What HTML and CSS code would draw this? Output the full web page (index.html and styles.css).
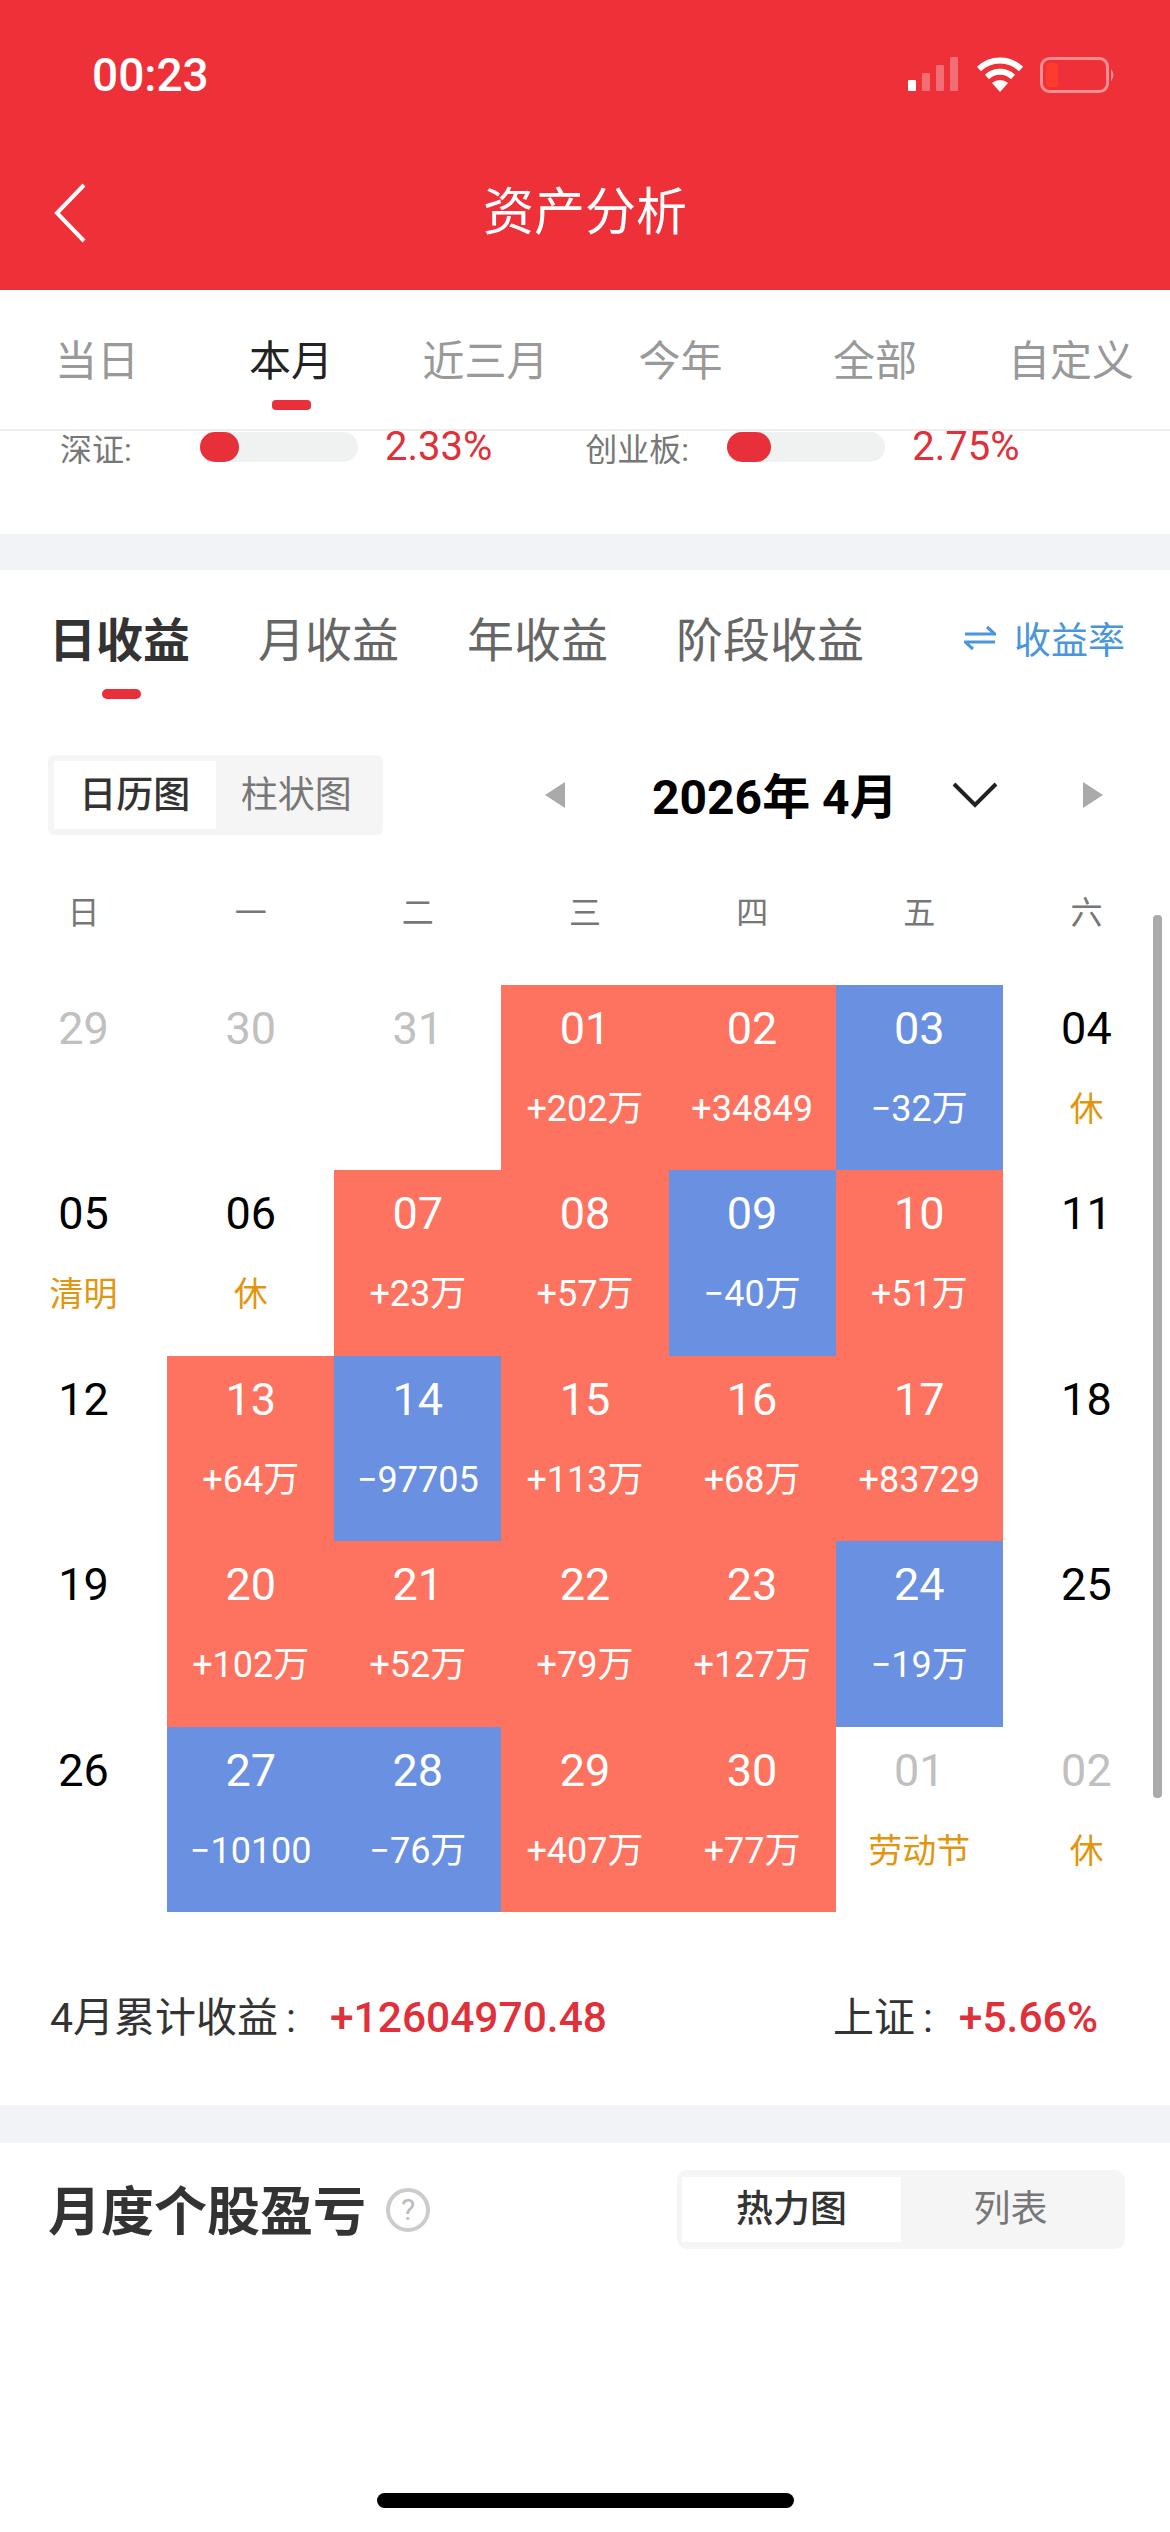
FILE: index.html
```html
<!DOCTYPE html>
<html lang="zh-CN">
<head>
    <meta charset="utf-8">
    <title>资产分析</title>
    <link rel="stylesheet" href="styles.css">
</head>
<body>
    <header class="top">
        <div class="status">
            <span class="time">00:23</span>
            <div class="status-icons">
                <svg width="52" height="36" viewBox="0 0 52 36">
                    <rect x="0" y="23" width="8" height="11" rx="1" fill="#fff"/>
                    <rect x="14" y="16" width="8" height="18" rx="1" fill="#fff" opacity=".3"/>
                    <rect x="28" y="8" width="8" height="26" rx="1" fill="#fff" opacity=".3"/>
                    <rect x="42" y="0" width="8" height="34" rx="1" fill="#fff" opacity=".3"/>
                </svg>
                <svg width="48" height="36" viewBox="0 0 48 36">
                    <path d="M3 12 A30 30 0 0 1 45 12" fill="none" stroke="#fff" stroke-width="6"/>
                    <path d="M11 20 A19 19 0 0 1 37 20" fill="none" stroke="#fff" stroke-width="6"/>
                    <path d="M16 26 A12 12 0 0 1 32 26 L24 35 Z" fill="#fff"/>
                </svg>
                <svg width="78" height="36" viewBox="0 0 78 36">
                    <rect x="1.5" y="1.5" width="66" height="33" rx="8" fill="none" stroke="#fff" stroke-opacity=".45" stroke-width="3"/>
                    <rect x="6" y="6" width="12" height="24" rx="3" fill="#ff3b30"/>
                    <path d="M71 12 Q76 18 71 24 Z" fill="#fff" opacity=".45"/>
                </svg>
            </div>
        </div>
        <div class="nav">
            <svg class="back" width="36" height="62" viewBox="0 0 36 62">
                <path d="M32 3 L5 31 L32 59" fill="none" stroke="#fff" stroke-width="4"/>
            </svg>
            <h1>资产分析</h1>
        </div>
    </header>

    <div class="ranges">
        <div class="range">当日</div>
        <div class="range on">本月</div>
        <div class="range">近三月</div>
        <div class="range">今年</div>
        <div class="range">全部</div>
        <div class="range">自定义</div>
    </div>

    <div class="index-row">
        <span class="index-name">深证:</span>
        <div class="bar"><div class="bar-fill" style="width: 39px"></div></div>
        <span class="index-pct">2.33%</span>
        <span class="index-name second">创业板:</span>
        <div class="bar"><div class="bar-fill" style="width: 44px"></div></div>
        <span class="index-pct">2.75%</span>
    </div>

    <div class="band"></div>

    <section class="income">
        <div class="income-tabs">
            <div class="income-tab on">日收益</div>
            <div class="income-tab">月收益</div>
            <div class="income-tab">年收益</div>
            <div class="income-tab">阶段收益</div>
            <div class="rate">
                <svg width="32" height="28" viewBox="0 0 32 28">
                    <path d="M1 10 H31 L23 3" fill="none" stroke="#4a96dc" stroke-width="3"/>
                    <path d="M31 18 H1 L9 25" fill="none" stroke="#4a96dc" stroke-width="3"/>
                </svg>
                <span>收益率</span>
            </div>
        </div>

        <div class="cal-head">
            <div class="seg">
                <div class="seg-item on">日历图</div>
                <div class="seg-item">柱状图</div>
            </div>
            <div class="month">
                <span class="tri left"></span>
                <span class="month-text">2026年 4月</span>
                <svg class="month-down" width="46" height="26" viewBox="0 0 46 26">
                    <path d="M2 2 L23 23 L44 2" fill="none" stroke="#222" stroke-width="4"/>
                </svg>
                <span class="tri right"></span>
            </div>
        </div>

        <div class="week">
            <span>日</span><span>一</span><span>二</span><span>三</span><span>四</span><span>五</span><span>六</span>
        </div>

        <div class="cal">
            <div class="day old"><b>29</b></div>
            <div class="day old"><b>30</b></div>
            <div class="day old"><b>31</b></div>
            <div class="day up"><b>01</b><i>+202万</i></div>
            <div class="day up"><b>02</b><i>+34849</i></div>
            <div class="day down"><b>03</b><i>−32万</i></div>
            <div class="day"><b>04</b><i class="off">休</i></div>

            <div class="day"><b>05</b><i class="off">清明</i></div>
            <div class="day"><b>06</b><i class="off">休</i></div>
            <div class="day up"><b>07</b><i>+23万</i></div>
            <div class="day up"><b>08</b><i>+57万</i></div>
            <div class="day down"><b>09</b><i>−40万</i></div>
            <div class="day up"><b>10</b><i>+51万</i></div>
            <div class="day"><b>11</b></div>

            <div class="day"><b>12</b></div>
            <div class="day up"><b>13</b><i>+64万</i></div>
            <div class="day down"><b>14</b><i>−97705</i></div>
            <div class="day up"><b>15</b><i>+113万</i></div>
            <div class="day up"><b>16</b><i>+68万</i></div>
            <div class="day up"><b>17</b><i>+83729</i></div>
            <div class="day"><b>18</b></div>

            <div class="day"><b>19</b></div>
            <div class="day up"><b>20</b><i>+102万</i></div>
            <div class="day up"><b>21</b><i>+52万</i></div>
            <div class="day up"><b>22</b><i>+79万</i></div>
            <div class="day up"><b>23</b><i>+127万</i></div>
            <div class="day down"><b>24</b><i>−19万</i></div>
            <div class="day"><b>25</b></div>

            <div class="day"><b>26</b></div>
            <div class="day down"><b>27</b><i>−10100</i></div>
            <div class="day down"><b>28</b><i>−76万</i></div>
            <div class="day up"><b>29</b><i>+407万</i></div>
            <div class="day up"><b>30</b><i>+77万</i></div>
            <div class="day old"><b>01</b><i class="off">劳动节</i></div>
            <div class="day old"><b>02</b><i class="off">休</i></div>
        </div>

        <div class="sum">
            <div>4月累计收益<span class="colon">:</span><span class="red sum-val wide">+12604970.48</span></div>
            <div>上证<span class="colon">:</span><span class="red sum-val">+5.66%</span></div>
        </div>
    </section>

    <div class="band last"></div>

    <section class="stocks">
        <h2>月度个股盈亏</h2>
        <span class="help">?</span>
        <div class="seg big">
            <div class="seg-item on">热力图</div>
            <div class="seg-item">列表</div>
        </div>
    </section>

    <div class="scrollbar"></div>
    <div class="home"></div>
</body>
</html>
```

FILE: styles.css
```css
body {
    position: relative;
    width: 1170px;
    height: 2532px;
    margin: 0;
    overflow: hidden;
    background: #fff;
    font-family: Roboto, "Noto Sans CJK SC", sans-serif;
    color: #333;
}

.top {
    height: 290px;
    background: #ee3038;
    color: #fff;
}

.status {
    display: flex;
    justify-content: space-between;
    align-items: center;
    height: 150px;
    padding: 0 52px 0 92px;
}

.time {
    font-size: 46px;
    font-weight: 500;
}

.status-icons {
    display: flex;
    align-items: center;
    gap: 16px;
}

.nav {
    position: relative;
    display: flex;
    justify-content: center;
    height: 124px;
}

.back {
    position: absolute;
    left: 52px;
    top: 32px;
}

.nav h1 {
    margin: 0;
    font-size: 51px;
    font-weight: 400;
    line-height: 126px;
}

.ranges {
    position: relative;
    z-index: 1;
    display: grid;
    grid-template-columns: 194px 194px 195px 195px 194px 198px;
    box-sizing: border-box;
    height: 141px;
    background: #fff;
    border-bottom: 2px solid #eee;
}

.range {
    position: relative;
    padding-top: 44px;
    text-align: center;
    font-size: 42px;
    line-height: 56px;
    color: #999;
}

.range.on {
    color: #222;
}

.range.on::after {
    content: "";
    position: absolute;
    left: 78px;
    top: 110px;
    width: 39px;
    height: 10px;
    border-radius: 4px;
    background: #e8303a;
}

.index-row {
    display: flex;
    align-items: center;
    box-sizing: border-box;
    height: 103px;
    padding: 0 0 72px 60px;
}

.index-name {
    width: 140px;
    font-size: 32px;
    color: #777;
}

.index-name.second {
    width: 142px;
    margin-left: 93px;
}

.bar {
    width: 158px;
    height: 30px;
    border-radius: 15px;
    background: #f0f1f1;
}

.bar-fill {
    height: 30px;
    border-radius: 15px;
    background: #e8303a;
}

.index-pct {
    margin-left: 27px;
    font-size: 40px;
    color: #e0303a;
}

.band {
    height: 36px;
    background: #f2f3f7;
}

.income-tabs {
    display: flex;
    align-items: center;
    height: 132px;
    padding-left: 49px;
}

.income-tab {
    position: relative;
    margin-right: 68px;
    font-size: 47px;
    color: #666;
}

.income-tab.on {
    font-weight: 700;
    color: #333;
}

.income-tab.on::after {
    content: "";
    position: absolute;
    left: 53px;
    bottom: -28px;
    width: 39px;
    height: 10px;
    border-radius: 5px;
    background: #e8303a;
}

.rate {
    display: flex;
    align-items: center;
    gap: 18px;
    margin-top: 4px;
    margin-left: 32px;
    font-size: 37px;
    color: #4a96dc;
}

.cal-head {
    display: flex;
    align-items: center;
    height: 80px;
    margin-top: 53px;
    padding-left: 48px;
}

.seg {
    display: flex;
    box-sizing: border-box;
    width: 335px;
    height: 80px;
    padding: 6px;
    border-radius: 6px;
    background: #f5f5f6;
}

.seg-item {
    width: 162px;
    text-align: center;
    font-size: 37px;
    line-height: 70px;
    color: #777;
    height: 68px;
}

.seg-item.on {
    background: #fff;
    font-weight: 500;
    color: #333;
}

.month {
    display: flex;
    align-items: center;
    margin-left: 162px;
}

.tri {
    width: 0;
    height: 0;
    border-top: 13px solid transparent;
    border-bottom: 13px solid transparent;
}

.tri.left {
    border-right: 20px solid #aaa;
}

.tri.right {
    margin-left: 85px;
    border-left: 20px solid #aaa;
}

.month-text {
    margin-top: -4px;
    margin-left: 87px;
    font-size: 48px;
    font-weight: 700;
    color: #000;
}

.month-down {
    margin-left: 54px;
}

.week {
    display: grid;
    grid-template-columns: repeat(7, 1fr);
    margin-top: 55px;
    text-align: center;
    font-size: 32px;
    line-height: 46px;
    color: #777;
}

.cal {
    display: grid;
    grid-template-columns: repeat(7, 1fr);
    grid-auto-rows: 185.4px;
    margin-top: 49px;
}

.day {
    display: flex;
    flex-direction: column;
    align-items: center;
    box-sizing: border-box;
    padding-top: 20px;
    color: #000;
}

.day b {
    font-size: 45px;
    font-weight: 400;
    line-height: 48px;
}

.day i {
    margin-top: 31px;
    font-size: 36px;
    font-style: normal;
    line-height: 50px;
}

.day i.off {
    font-size: 34px;
    color: #e2960f;
}

.day.old b {
    color: #c0c0c0;
}

.day.up {
    background: #fe735f;
    color: #fff;
}

.day.down {
    background: #6a90e2;
    color: #fff;
}

.sum {
    display: flex;
    justify-content: space-between;
    margin-top: 76px;
    padding: 0 72px 0 50px;
    font-size: 41px;
    line-height: 60px;
    color: #333;
}

.colon {
    margin-left: 8px;
}

.red {
    color: #e0303a;
}

.sum-val {
    margin-left: 26px;
    font-size: 42.5px;
    font-weight: 500;
}

.sum-val.wide {
    margin-left: 34px;
}

.band.last {
    margin-top: 57px;
    height: 38px;
}

.stocks {
    display: flex;
    align-items: center;
    height: 134px;
    padding: 0 45px 0 48px;
}

.stocks h2 {
    margin: -4px 0 0;
    font-size: 53px;
    font-weight: 700;
    color: #333;
}

.help {
    width: 36px;
    height: 36px;
    margin-left: 20px;
    border: 4px solid #ccc;
    border-radius: 50%;
    text-align: center;
    font-size: 30px;
    line-height: 36px;
    color: #bbb;
}

.seg.big {
    width: 448px;
    height: 79px;
    margin-left: auto;
    padding: 7px 5px;
    border-radius: 10px;
}

.seg.big .seg-item {
    width: 219px;
    height: 65px;
    line-height: 65px;
}

.scrollbar {
    position: absolute;
    left: 1153px;
    top: 915px;
    width: 9px;
    height: 883px;
    border-radius: 4px;
    background: #aaa;
}

.home {
    position: absolute;
    left: 377px;
    top: 2493px;
    width: 417px;
    height: 15px;
    border-radius: 8px;
    background: #000;
}
```
